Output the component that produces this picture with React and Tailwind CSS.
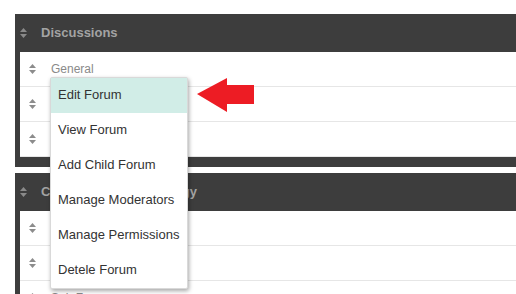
import React from "react";

function SortIcon({ color }) {
  return (
    <svg width="7" height="10" viewBox="0 0 7 10" className="shrink-0">
      <polygon points="3.5,0 7,4 0,4" fill={color} />
      <polygon points="0,6 7,6 3.5,10" fill={color} />
    </svg>
  );
}

function Row({ label }) {
  return (
    <div className="h-[35px] border-b border-[#e6e6e6] flex items-center pl-[9px]">
      <SortIcon color="#8c8c8c" />
      {label ? <span className="ml-[15px] text-[12px] text-[#8a8a8a]">{label}</span> : null}
    </div>
  );
}

function Panel({ title, rows, bottom = true }) {
  return (
    <div className="bg-[#3d3d3d]">
      <div className="h-[38px] flex items-center pl-[5px]">
        <SortIcon color="#8a8a8a" />
        <span className="ml-[14px] text-[13px] font-bold text-[#a3a3a3] whitespace-nowrap">{title}</span>
      </div>
      <div className="ml-[5px] bg-white">
        {rows.map((r, i) => (
          <Row key={i} label={r} />
        ))}
      </div>
      {bottom && <div className="h-[10px]" />}
    </div>
  );
}

export default function App() {
  const items = [
    "Edit Forum",
    "View Forum",
    "Add Child Forum",
    "Manage Moderators",
    "Manage Permissions",
    "Detele Forum",
  ];
  return (
    <div
      className="relative w-[516px] h-[294px] overflow-hidden bg-white pt-[14px] pl-[15px]"
      style={{ fontFamily: '"Liberation Sans", Arial, sans-serif' }}
    >
      <Panel title="Discussions" rows={["General", "", ""]} />
      <div className="h-[6px]" />
      <Panel title="Community Methodology" rows={["", "", "Sub Forum"]} bottom={false} />

      <div className="absolute left-[50px] top-[77px] w-[138px] bg-white border border-[#d9d9d9] rounded-[2px] shadow-[1px_2px_4px_rgba(0,0,0,0.35)]">
        {items.map((it, i) => (
          <div
            key={it}
            className={`h-[35px] flex items-center pl-[7px] pb-[1px] text-[13px] text-[#333333] ${i === 0 ? "bg-[#d1ede7]" : ""}`}
          >
            {it}
          </div>
        ))}
      </div>

      <svg className="absolute left-[196px] top-[77px]" width="60" height="36" viewBox="0 0 60 36">
        <polygon points="1,17 31,1 31,8 58,8 58,27 31,27 31,35" fill="#ed1c24" />
      </svg>
    </div>
  );
}
